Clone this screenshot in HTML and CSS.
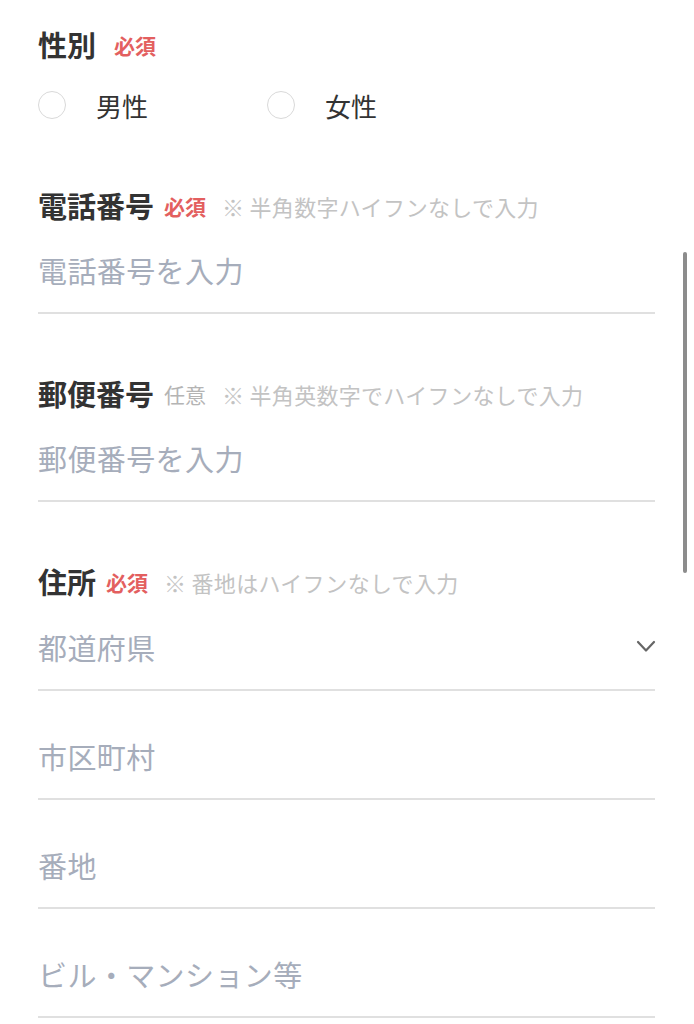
FILE: index.html
```html
<!DOCTYPE html>
<html lang="ja">
<head>
<meta charset="utf-8">
<title>フォーム</title>
<link rel="stylesheet" href="styles.css">
</head>
<body>
<form class="form">
  <section class="group group--gender">
    <div class="label-row">
      <span class="label">性別</span>
      <span class="badge badge--req badge--wide">必須</span>
    </div>
    <div class="radios">
      <label class="radio"><span class="radio__circle"></span><span class="radio__text">男性</span></label>
      <label class="radio"><span class="radio__circle"></span><span class="radio__text">女性</span></label>
    </div>
  </section>

  <section class="group">
    <div class="label-row">
      <span class="label">電話番号</span>
      <span class="badge badge--req">必須</span>
      <span class="hint">※ 半角数字ハイフンなしで入力</span>
    </div>
    <div class="field field--first"><input class="input" type="text" placeholder="電話番号を入力"></div>
  </section>

  <section class="group">
    <div class="label-row">
      <span class="label">郵便番号</span>
      <span class="badge badge--opt">任意</span>
      <span class="hint">※ 半角英数字でハイフンなしで入力</span>
    </div>
    <div class="field field--first"><input class="input" type="text" placeholder="郵便番号を入力"></div>
  </section>

  <section class="group group--last">
    <div class="label-row">
      <span class="label">住所</span>
      <span class="badge badge--req">必須</span>
      <span class="hint">※ 番地はハイフンなしで入力</span>
    </div>
    <div class="field field--first field--select">
      <span class="select-text">都道府県</span>
      <svg class="chevron" width="20" height="13" viewBox="0 0 20 13"><path d="M2 2 L10 10.5 L18 2" fill="none" stroke="#666" stroke-width="2.2" stroke-linecap="round" stroke-linejoin="round"/></svg>
    </div>
    <div class="field"><input class="input" type="text" placeholder="市区町村"></div>
    <div class="field"><input class="input" type="text" placeholder="番地"></div>
    <div class="field"><input class="input" type="text" placeholder="ビル・マンション等"></div>
  </section>
</form>
<div class="scrollbar"></div>
</body>
</html>
```

FILE: styles.css
```css
* { box-sizing: border-box; }
html, body { margin: 0; padding: 0; background: #fff; }
body {
  font-family: "Noto Sans CJK JP", "Noto Sans", sans-serif;
  color: #333;
  overflow: hidden;
  height: 1024px;
}
.form {
  padding: 24px 39px 0 38px;
  display: flex;
  flex-direction: column;
}
.group { margin-bottom: 59px; }
.group--gender { margin-bottom: 60px; }
.group--last { margin-bottom: 0; }

.label-row {
  display: flex;
  align-items: center;
  height: 40px;
  white-space: nowrap;
}
.label {
  font-size: 29px;
  font-weight: 700;
  color: #333;
}
.badge {
  font-size: 21px;
  margin-left: 10px;
  padding-top: 2px;
}
.badge--wide { margin-left: 18px; }
.badge--req { color: #e35f5f; font-weight: 700; }
.badge--opt { color: #b4b4b4; font-weight: 400; }
.hint {
  font-size: 22px;
  color: #c3c3c3;
  margin-left: 16px;
  padding-top: 2px;
  letter-spacing: 0.3px;
}

.radios {
  display: flex;
  margin-top: 21px;
  height: 40px;
  align-items: center;
}
.radio {
  display: flex;
  align-items: center;
  width: 229px;
}
.radio__circle {
  width: 28px;
  height: 28px;
  border-radius: 50%;
  border: 1.5px solid #d9d9d9;
  flex: none;
}
.radio__text {
  margin-left: 30px;
  font-size: 26px;
  color: #333;
}

.field {
  margin-top: 45px;
  padding-bottom: 22px;
  border-bottom: 2px solid #e0e0e0;
  display: flex;
  align-items: center;
}
.field--first { margin-top: 25px; }
.input {
  display: block;
  width: 100%;
  height: 40px;
  border: 0;
  padding: 0;
  margin: 0;
  outline: none;
  background: transparent;
  font-family: inherit;
  font-size: 29px;
  letter-spacing: 0.4px;
  color: #333;
}
.input::placeholder { color: #a6adbb; opacity: 1; }
.field--select { height: 65px; justify-content: space-between; }
.select-text {
  font-size: 29px;
  letter-spacing: 0.4px;
  line-height: 40px;
  color: #a6adbb;
}
.chevron { margin-right: -1px; }

.scrollbar {
  position: fixed;
  right: 7px;
  top: 252px;
  width: 4px;
  height: 321px;
  border-radius: 2px;
  background: #8c8c8c;
}
```
